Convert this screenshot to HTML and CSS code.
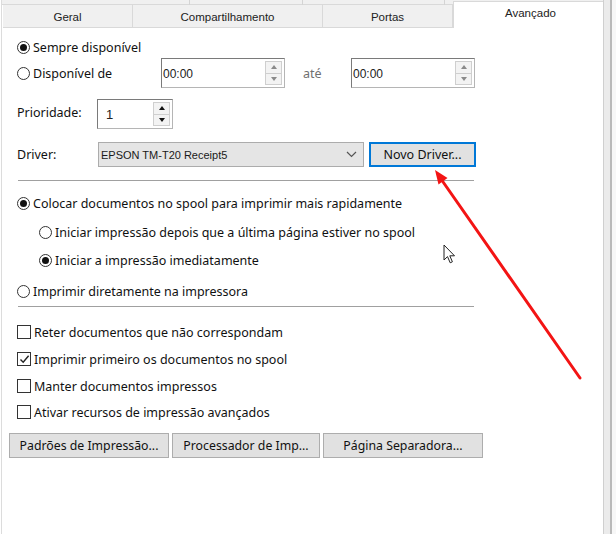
FILE: index.html
```html
<!DOCTYPE html>
<html lang="pt-BR">
<head>
<meta charset="utf-8">
<title>Propriedades da impressora - Avançado</title>
<link rel="stylesheet" href="styles.css">
</head>
<body>
<div class="screen">
  <div class="panel">
    <div class="tabbar">
      <div class="tabs-back">
        <span class="bk b1"></span><span class="bk b2"></span><span class="bk b3"></span><span class="bk b4"></span>
      </div>
      <div class="tabs">
        <div class="tab w1">Geral</div>
        <div class="tab w2">Compartilhamento</div>
        <div class="tab w3">Portas</div>
        <div class="tab active">Avançado</div>
      </div>
    </div>

    <div class="content">
      <div class="row r-always">
        <span class="radio on"></span><span class="lbl">Sempre disponível</span>
      </div>
      <div class="row r-avail">
        <span class="radio"></span><span class="lbl avail-lbl">Disponível de</span>
        <div class="spin time">
          <span class="spin-val">00:00</span>
          <span class="spin-btns dis"><span class="sb up"></span><span class="sb down"></span></span>
        </div>
        <span class="ate">até</span>
        <div class="spin time">
          <span class="spin-val">00:00</span>
          <span class="spin-btns dis"><span class="sb up"></span><span class="sb down"></span></span>
        </div>
      </div>
      <div class="row r-prio">
        <span class="lbl prio-lbl">Prioridade:</span>
        <div class="spin prio">
          <span class="spin-val prio-val">1</span>
          <span class="spin-btns"><span class="sb up"></span><span class="sb down"></span></span>
        </div>
      </div>
      <div class="row r-driver">
        <span class="lbl driver-lbl">Driver:</span>
        <div class="select">
          <span class="select-val">EPSON TM-T20 Receipt5</span>
          <svg class="chev" width="11" height="7" viewBox="0 0 11 7"><path d="M1 1 L5.5 5.5 L10 1" fill="none" stroke="#555" stroke-width="1.2"/></svg>
        </div>
        <button class="btn default">Novo Driver...</button>
      </div>
      <div class="sep sep1"></div>

      <div class="row r-spool">
        <span class="radio on"></span><span class="lbl">Colocar documentos no spool para imprimir mais rapidamente</span>
      </div>
      <div class="row r-sub1 indent">
        <span class="radio"></span><span class="lbl">Iniciar impressão depois que a última página estiver no spool</span>
      </div>
      <div class="row r-sub2 indent">
        <span class="radio on"></span><span class="lbl">Iniciar a impressão imediatamente</span>
      </div>
      <div class="row r-direct">
        <span class="radio"></span><span class="lbl">Imprimir diretamente na impressora</span>
      </div>
      <div class="sep sep2"></div>

      <div class="row r-c1">
        <span class="check"></span><span class="lbl">Reter documentos que não correspondam</span>
      </div>
      <div class="row r-c2">
        <span class="check on"><svg width="11" height="11" viewBox="0 0 11 11"><path d="M1.5 5.5 L4.2 8.3 L9.6 1.8" fill="none" stroke="#222" stroke-width="1.4"/></svg></span><span class="lbl">Imprimir primeiro os documentos no spool</span>
      </div>
      <div class="row r-c3">
        <span class="check"></span><span class="lbl">Manter documentos impressos</span>
      </div>
      <div class="row r-c4">
        <span class="check"></span><span class="lbl">Ativar recursos de impressão avançados</span>
      </div>

      <div class="btn-row">
        <button class="btn b-pad">Padrões de Impressão...</button>
        <button class="btn b-proc">Processador de Imp...</button>
        <button class="btn b-sep">Página Separadora...</button>
      </div>
    </div>
  </div>
  <div class="edge"><span class="e1"></span><span class="e2"></span><span class="e3"></span></div>

  <svg class="annot" width="616" height="534" viewBox="0 0 616 534">
    <line x1="580" y1="378" x2="441" y2="179" stroke="#f31414" stroke-width="3" stroke-linecap="round"/>
    <polygon points="435,170 447.5,178 438.5,184.5" fill="#f31414"/>
  </svg>
  <svg class="cursor" width="14" height="21" viewBox="0 0 14 21">
    <path d="M1 1 L1 16 L4.5 12.6 L7.2 18.8 L9.4 17.8 L6.8 11.8 L11.5 11.8 Z" fill="#fff" stroke="#222" stroke-width="1" stroke-linejoin="round"/>
  </svg>
</div>
</body>
</html>
```

FILE: styles.css
```css
* { box-sizing: border-box; }
html, body {
  margin: 0;
  padding: 0;
  background: #ffffff;
}
.screen {
  position: relative;
  width: 616px;
  height: 534px;
  overflow: hidden;
  display: flex;
  font-family: "Noto Sans", "Open Sans", sans-serif;
  font-size: 12.5px;
  color: #111;
}
.panel {
  width: 603px;
  margin-left: 1px;
  border-left: 1px solid #dcdcdc;
  border-right: 1px solid #cfcfcf;
  background: #fff;
  display: flex;
  flex-direction: column;
}
/* tabs */
.tabbar {
  height: 28px;
  display: flex;
  flex-direction: column;
}
.tabs-back {
  height: 5px;
  display: flex;
  background: #f0f0f0;
  border-bottom: 1px solid #d9d9d9;
}
.bk { height: 5px; border-right: 1px solid #d4d4d4; }
.b1 { width: 188px; }
.b2 { width: 113px; }
.b3 { width: 142px; }
.b4 { flex: 1; border-right: none; }
.tabs {
  height: 23px;
  display: flex;
  align-items: flex-end;
  padding-left: 1px;
  font-family: "Liberation Sans", Arial, sans-serif;
  font-size: 11.5px;
  color: #222;
}
.tab {
  height: 23px;
  background: #f0f0f0;
  border: 1px solid #d9d9d9;
  border-top: none;
  border-left: none;
  display: flex;
  align-items: center;
  justify-content: center;
  padding-top: 1px;
}
.w1 { width: 130px; }
.w2 { width: 190px; }
.w3 { width: 130px; }
.tab.active {
  flex: 1;
  height: 27px;
  margin-top: -4px;
  align-self: flex-start;
  background: #fff;
  border: 1px solid #d9d9d9;
  border-bottom: none;
  border-right: none;
  position: relative;
  align-items: flex-start;
  padding-top: 5px;
  padding-left: 4px;
  margin-bottom: -1px;
}

/* content */
.content {
  padding: 9px 0 0 15px;
  display: flex;
  flex-direction: column;
}
.row {
  display: flex;
  align-items: center;
  height: 20px;
}
.lbl { white-space: nowrap; }
.radio {
  width: 13px;
  height: 13px;
  border: 1px solid #333;
  border-radius: 50%;
  display: inline-flex;
  align-items: center;
  justify-content: center;
  margin-right: 3px;
  flex: none;
  background: #fff;
}
.radio.on::after {
  content: "";
  width: 7px;
  height: 7px;
  border-radius: 50%;
  background: #111;
}
.check {
  width: 14px;
  height: 14px;
  border: 1px solid #333;
  display: inline-flex;
  align-items: center;
  justify-content: center;
  margin-right: 3px;
  flex: none;
  background: #fff;
}
.r-always { margin-top: 0; }
.r-avail { margin-top: 1px; height: 30px; }
.avail-lbl { width: 128px; }
.ate { width: 66px; padding-left: 18px; color: #707070; }
.spin {
  height: 30px;
  border: 1px solid #7a7a7a;
  border-bottom-color: #b5b5b5;
  border-right-color: #b5b5b5;
  background: #fff;
  display: flex;
  align-items: center;
  justify-content: space-between;
  padding: 0 2px 0 1px;
  font-family: "Liberation Sans", Arial, sans-serif;
  font-size: 12px;
  color: #222;
}
.time { width: 124px; }
.spin-val { padding-top: 1px; }
.spin-btns {
  display: flex;
  flex-direction: column;
  width: 17px;
  height: 24px;
}
.sb {
  flex: 1;
  background: #f3f3f3;
  border: 1px solid #cfcfcf;
  display: flex;
  align-items: center;
  justify-content: center;
}
.sb.down { border-top: none; }
.sb::after {
  content: "";
  width: 0;
  height: 0;
  border-left: 3.5px solid transparent;
  border-right: 3.5px solid transparent;
}
.sb.up::after { border-bottom: 4px solid #111; }
.sb.down::after { border-top: 4px solid #111; }
.dis .sb.up::after { border-bottom-color: #8a8a8a; }
.dis .sb.down::after { border-top-color: #8a8a8a; }

.r-prio { margin-top: 11px; height: 30px; }
.prio-lbl { width: 80px; padding-bottom: 3px; }
.prio { width: 76px; }
.prio-val { padding-left: 7px; font-size: 13px; }
.r-driver { margin-top: 13px; height: 25px; }
.driver-lbl { width: 81px; }
.select {
  width: 266px;
  height: 25px;
  background: #e5e5e5;
  border: 1px solid #acacac;
  display: flex;
  align-items: center;
  justify-content: space-between;
  padding: 0 6px 0 2px;
  font-family: "Liberation Sans", Arial, sans-serif;
  font-size: 11px;
  color: #1a1a1a;
}
.btn {
  font-family: "Noto Sans", "Open Sans", sans-serif;
  font-size: 12.3px;
  color: #111;
  background: #e1e1e1;
  border: 1px solid #adadad;
  height: 25px;
  padding: 0;
  display: flex;
  align-items: center;
  justify-content: center;
}
.btn.default {
  margin-left: 5px;
  width: 107px;
  font-size: 12.5px;
  border: 2px solid #0078d7;
}
.sep {
  width: 456px;
  height: 1px;
  background: #a0a0a0;
  margin-left: 1px;
}
.sep1 { margin-top: 13px; }
.r-spool { margin-top: 12px; }
.r-sub1 { margin-top: 9px; }
.r-sub2 { margin-top: 8px; }
.r-direct { margin-top: 11px; }
.indent { padding-left: 22px; }
.sep2 { margin-top: 5px; }
.r-c1 { margin-top: 15px; }
.r-c2 { margin-top: 7px; }
.r-c3 { margin-top: 7px; }
.r-c4 { margin-top: 6px; }
.btn-row {
  margin-top: 11px;
  margin-left: -8px;
  display: flex;
  gap: 3px;
}
.b-pad { width: 160px; }
.b-proc { width: 148px; }
.b-sep { width: 160px; }

/* right edge */
.edge {
  flex: 1;
  display: flex;
}
.e1 { width: 6px; background: #ebebeb; }
.e2 { width: 2px; background: #b9b9b9; }
.e3 { flex: 1; background: #f7f7f7; }

/* annotations overlay */
.annot {
  position: absolute;
  left: 0;
  top: 0;
  pointer-events: none;
}
.cursor {
  position: absolute;
  left: 443px;
  top: 244px;
}
```
